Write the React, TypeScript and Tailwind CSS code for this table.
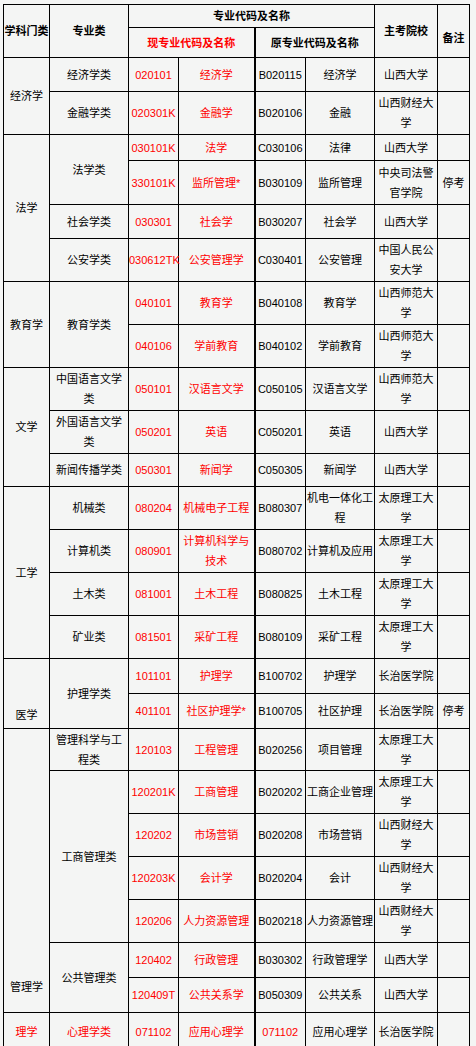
import React from "react";

// -----------------------------
// Data
// -----------------------------
type Span = { t: string; span?: number; cls?: string };
type Row = {
  h: string;
  cat?: Span;
  sub?: Span;
  code: string;
  name: string;
  oc: string;
  on: string;
  sc: string;
  note?: string;
  red?: boolean;
};

const rows: Row[] = [
  { h: "h-[34px]", cat: { t: "经济学", span: 2 }, sub: { t: "经济学类" }, code: "020101", name: "经济学", oc: "B020115", on: "经济学", sc: "山西大学" },
  { h: "h-[43px]", sub: { t: "金融学类" }, code: "020301K", name: "金融学", oc: "B020106", on: "金融", sc: "山西财经大|学" },
  { h: "h-[26px]", cat: { t: "法学", span: 4 }, sub: { t: "法学类", span: 2 }, code: "030101K", name: "法学", oc: "C030106", on: "法律", sc: "山西大学" },
  { h: "h-[44px]", code: "330101K", name: "监所管理*", oc: "B030109", on: "监所管理", sc: "中央司法警|官学院", note: "停考" },
  { h: "h-[34px]", sub: { t: "社会学类" }, code: "030301", name: "社会学", oc: "B030207", on: "社会学", sc: "山西大学" },
  { h: "h-[43px]", sub: { t: "公安学类" }, code: "030612TK", name: "公安管理学", oc: "C030401", on: "公安管理", sc: "中国人民公|安大学" },
  { h: "h-[43px]", cat: { t: "教育学", span: 2 }, sub: { t: "教育学类", span: 2 }, code: "040101", name: "教育学", oc: "B040108", on: "教育学", sc: "山西师范大|学" },
  { h: "h-[43px]", code: "040106", name: "学前教育", oc: "B040102", on: "学前教育", sc: "山西师范大|学" },
  { h: "h-[43px]", cat: { t: "文学", span: 3 }, sub: { t: "中国语言文学|类" }, code: "050101", name: "汉语言文学", oc: "C050105", on: "汉语言文学", sc: "山西师范大|学" },
  { h: "h-[43px]", sub: { t: "外国语言文学|类" }, code: "050201", name: "英语", oc: "C050201", on: "英语", sc: "山西大学" },
  { h: "h-[33px]", sub: { t: "新闻传播学类" }, code: "050301", name: "新闻学", oc: "C050305", on: "新闻学", sc: "山西大学" },
  { h: "h-[43px]", cat: { t: "工学", span: 4 }, sub: { t: "机械类" }, code: "080204", name: "机械电子工程", oc: "B080307", on: "机电一体化工|程", sc: "太原理工大|学" },
  { h: "h-[43px]", sub: { t: "计算机类" }, code: "080901", name: "计算机科学与|技术", oc: "B080702", on: "计算机及应用", sc: "太原理工大|学" },
  { h: "h-[43px]", sub: { t: "土木类" }, code: "081001", name: "土木工程", oc: "B080825", on: "土木工程", sc: "太原理工大|学" },
  { h: "h-[43px]", sub: { t: "矿业类" }, code: "081501", name: "采矿工程", oc: "B080109", on: "采矿工程", sc: "太原理工大|学" },
  { h: "h-[35px]", cat: { t: "医学", span: 2, cls: "align-bottom pb-[3px]" }, sub: { t: "护理学类", span: 2 }, code: "101101", name: "护理学", oc: "B100702", on: "护理学", sc: "长治医学院" },
  { h: "h-[35px]", code: "401101", name: "社区护理学*", oc: "B100705", on: "社区护理", sc: "长治医学院", note: "停考" },
  { h: "h-[42px]", cat: { t: "管理学", span: 7, cls: "align-bottom pb-[15px]" }, sub: { t: "管理科学与工|程类" }, code: "120103", name: "工程管理", oc: "B020256", on: "项目管理", sc: "太原理工大|学" },
  { h: "h-[43px]", sub: { t: "工商管理类", span: 4 }, code: "120201K", name: "工商管理", oc: "B020202", on: "工商企业管理", sc: "太原理工大|学" },
  { h: "h-[43px]", code: "120202", name: "市场营销", oc: "B020208", on: "市场营销", sc: "山西财经大|学" },
  { h: "h-[43px]", code: "120203K", name: "会计学", oc: "B020204", on: "会计", sc: "山西财经大|学" },
  { h: "h-[43px]", code: "120206", name: "人力资源管理", oc: "B020218", on: "人力资源管理", sc: "山西财经大|学" },
  { h: "h-[35px]", sub: { t: "公共管理类", span: 2 }, code: "120402", name: "行政管理", oc: "B030302", on: "行政管理学", sc: "山西大学" },
  { h: "h-[35px]", code: "120409T", name: "公共关系学", oc: "B050309", on: "公共关系", sc: "山西大学" },
  { h: "h-[38px]", red: true, cat: { t: "理学" }, sub: { t: "心理学类" }, code: "071102", name: "应用心理学", oc: "071102", on: "应用心理学", sc: "长治医学院" },
];

// split "a|b" into lines
function lines(s: string) {
  const parts = s.split("|");
  return parts.map((p, i) => (
    <React.Fragment key={i}>
      {p}
      {i < parts.length - 1 && <br />}
    </React.Fragment>
  ));
}

const cell = "border border-black p-0 text-center whitespace-nowrap";
const RED = "text-[#ff0000]";

export default function App() {
  return (
    <div
      className="min-h-screen bg-[#f4f5f4] pl-[3px] pt-[4px] text-[11px] leading-[20px] text-black"
      style={{ fontFamily: '"Liberation Sans", "Noto Sans CJK SC", sans-serif' }}
    >
      <table className="w-[466px] table-fixed border-collapse">
        <colgroup>
          <col className="w-[46px]" />
          <col className="w-[79px]" />
          <col className="w-[50px]" />
          <col className="w-[76px]" />
          <col className="w-[51px]" />
          <col className="w-[69px]" />
          <col className="w-[63px]" />
          <col className="w-[32px]" />
        </colgroup>
        <thead>
          <tr className="h-[23px] font-bold">
            <td rowSpan={2} className={cell}>学科门类</td>
            <td rowSpan={2} className={cell}>专业类</td>
            <td colSpan={4} className={cell}>专业代码及名称</td>
            <td rowSpan={2} className={cell}>主考院校</td>
            <td rowSpan={2} className={`${cell} pt-[14px]`}>备注</td>
          </tr>
          <tr className="h-[30px] font-bold">
            <td colSpan={2} className={`${cell} ${RED}`}>现专业代码及名称</td>
            <td colSpan={2} className={`${cell} border-l-2`}>原专业代码及名称</td>
          </tr>
        </thead>
        <tbody>
          {rows.map((r, i) => (
            <tr key={i} className={r.h}>
              {r.cat && (
                <td rowSpan={r.cat.span ?? 1} className={`${cell} ${r.cat.cls ?? ""} ${r.red ? RED : ""}`}>
                  {lines(r.cat.t)}
                </td>
              )}
              {r.sub && (
                <td rowSpan={r.sub.span ?? 1} className={`${cell} ${r.red ? RED : ""}`}>
                  {lines(r.sub.t)}
                </td>
              )}
              <td className={`${cell} ${RED}`}>{r.code}</td>
              <td className={`${cell} ${RED}`}>{lines(r.name)}</td>
              <td className={`${cell} border-l-2 ${r.red ? RED : ""}`}>{r.oc}</td>
              <td className={cell}>{lines(r.on)}</td>
              <td className={cell}>{lines(r.sc)}</td>
              <td className={cell}>{r.note}</td>
            </tr>
          ))}
        </tbody>
      </table>
    </div>
  );
}
